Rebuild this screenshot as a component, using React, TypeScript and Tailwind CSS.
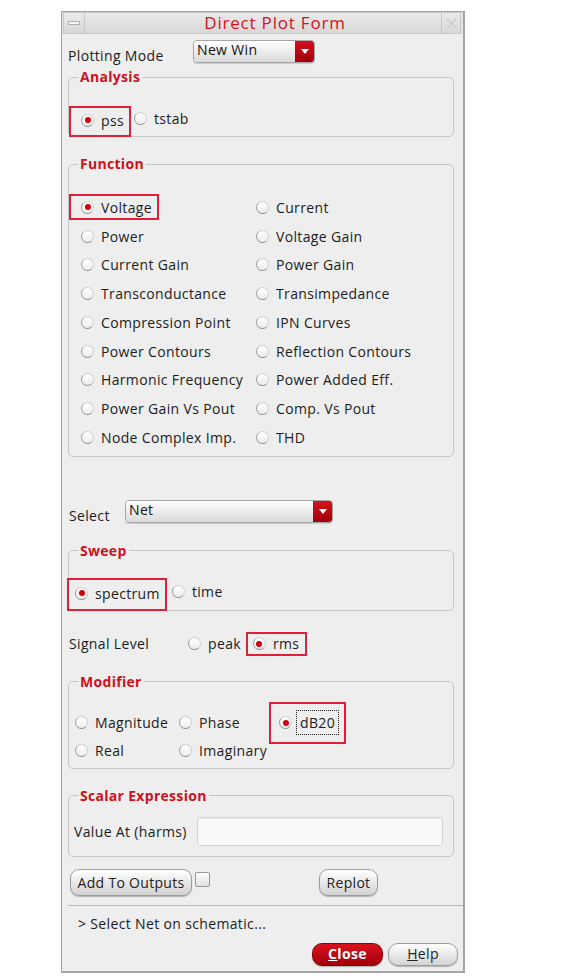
import React from "react";

const FONT = { fontFamily: '"Open Sans", "DejaVu Sans", sans-serif' };

function Radio({ on }: { on?: boolean }) {
  return (
    <span className="flex h-[13px] w-[13px] shrink-0 items-center justify-center rounded-full border border-[#d0d0d0] border-b-[#8c8c8c] border-l-[#9c9c9c] bg-gradient-to-b from-[#ffffff] to-[#ececec]">
      {on && <span className="h-[6px] w-[6px] rounded-full bg-[#d00010]" />}
    </span>
  );
}

function Option({ label, on }: { label: string; on?: boolean }) {
  return (
    <span className="flex items-center gap-[7px] whitespace-nowrap">
      <Radio on={on} />
      <span>{label}</span>
    </span>
  );
}

function Group({ title, children, className }: { title: string; children: React.ReactNode; className?: string }) {
  return (
    <fieldset className={"rounded-[5px] border border-[#c6c6c6] " + (className ?? "")}>
      <legend className="ml-[9px] px-[2px] text-[14px] font-bold leading-[16px] tracking-[0.3px] text-[#d0101c]">
        {title}
      </legend>
      {children}
    </fieldset>
  );
}

function Dropdown({ value, className }: { value: string; className?: string }) {
  return (
    <div className={"flex h-[23px] overflow-hidden rounded-[4px] border border-[#a6a6a6] shadow-[0_1px_1px_rgba(0,0,0,0.15)] " + (className ?? "")}>
      <div className="flex-1 bg-gradient-to-b from-[#ffffff] to-[#dadada] pl-[3px] text-[14px] leading-[18px] text-[#111]">{value}</div>
      <div className="flex w-[19px] items-center justify-center bg-gradient-to-b from-[#d4121c] to-[#a0000a]">
        <svg width="8" height="5" viewBox="0 0 8 5">
          <path d="M0 0h8L4 5z" fill="#ffffff" />
        </svg>
      </div>
    </div>
  );
}

const FUNCS: [string, string][] = [
  ["Voltage", "Current"],
  ["Power", "Voltage Gain"],
  ["Current Gain", "Power Gain"],
  ["Transconductance", "Transimpedance"],
  ["Compression Point", "IPN Curves"],
  ["Power Contours", "Reflection Contours"],
  ["Harmonic Frequency", "Power Added Eff."],
  ["Power Gain Vs Pout", "Comp. Vs Pout"],
  ["Node Complex Imp.", "THD"],
];

const btn =
  "h-[27px] rounded-[9px] border border-[#9c9c9c] bg-gradient-to-b from-[#ffffff] to-[#d2d2d2] px-[6px] text-[14px] tracking-[0.3px] text-[#222] shadow-[0_1px_1px_rgba(0,0,0,0.25)]";

export default function App() {
  return (
    <div className="h-[980px] bg-white pl-[61px] pt-[11px] text-[14px] tracking-[0.35px] text-[#1c1c1c]" style={FONT}>
      <div className="w-[404px] border-b-2 border-l border-r-2 border-t border-[#a4a4a4] bg-[#eeeeee]">
        {/* title bar */}
        <div className="flex h-[22px] bg-[#e2e2e2]">
          <div className="ml-[1px] flex w-[22px] items-center justify-center border border-[#c8c8c8] bg-gradient-to-b from-[#ececec] to-[#d6d6d6]">
            <span className="h-[4px] w-[12px] border border-[#b0b0b0] bg-[#f6f6f6]" />
          </div>
          <div className="flex flex-1 items-center justify-center border border-l-0 border-[#c8c8c8] bg-gradient-to-b from-[#eaeaea] to-[#d8d8d8] pl-[24px] text-[17px] leading-[20px] tracking-[0.8px] text-[#d8101c]">
            Direct Plot Form
          </div>
          <div className="mr-[2px] flex w-[19px] items-center justify-center border border-l-0 border-[#c8c8c8] bg-gradient-to-b from-[#eaeaea] to-[#d8d8d8]">
            <svg width="11" height="11" viewBox="0 0 11 11" fill="none" stroke="#bdbdbd" strokeWidth="1.2" strokeDasharray="2 1">
              <path d="M1 1l9 9M10 1l-9 9" />
            </svg>
          </div>
        </div>

        <div className="pb-[5px] pl-[6px] pr-[9px]">
          {/* plotting mode */}
          <div className="mt-[6px] flex h-[23px]">
            <span className="w-[125px] pt-[8px] leading-[16px]">Plotting Mode</span>
            <Dropdown value="New Win" className="w-[122px]" />
          </div>

          {/* analysis */}
          <Group title="Analysis" className="mt-[6px]">
            <div className="mt-[21px] flex h-[30px] items-start">
              <span className="flex h-[31px] items-center border-2 border-[#e0203a] pb-[3px] pl-[10px] pr-[5px]">
                <Option label="pss" on />
              </span>
              <span className="ml-[3px] flex h-[28px] items-center pb-[3px]">
                <Option label="tstab" />
              </span>
            </div>
          </Group>

          {/* function */}
          <Group title="Function" className="mt-[19px] pb-[4px]">
            <div className="mt-[21px] grid grid-cols-[175px_1fr]">
              {FUNCS.map(([a, b], i) => (
                <React.Fragment key={a}>
                  <div className="flex h-[28.75px] items-center">
                    {i === 0 ? (
                      <span className="flex h-[26px] items-center border-2 border-[#e0203a] pl-[10px] pr-[5px]">
                        <Option label={a} on />
                      </span>
                    ) : (
                      <span className="flex h-[26px] items-center border-2 border-transparent pl-[10px]">
                        <Option label={a} />
                      </span>
                    )}
                  </div>
                  <div className="flex h-[28.75px] items-center pl-[12px]">
                    <Option label={b} />
                  </div>
                </React.Fragment>
              ))}
            </div>
          </Group>

          {/* select */}
          <div className="mt-[43px] flex h-[23px]">
            <span className="w-[57px] pl-[1px] pt-[8px] leading-[16px]">Select</span>
            <Dropdown value="Net" className="w-[208px]" />
          </div>

          {/* sweep */}
          <Group title="Sweep" className="mt-[20px]">
            <div className="mt-[19px] flex h-[32px] items-start">
              <span className="-ml-[2px] flex h-[33px] items-center border-2 border-[#e0203a] pb-[2px] pl-[6px] pr-[5px]">
                <Option label="spectrum" on />
              </span>
              <span className="ml-[5px] flex h-[30px] items-center pb-[2px]">
                <Option label="time" />
              </span>
            </div>
          </Group>

          {/* signal level */}
          <div className="mt-[21px] flex h-[24px] items-center">
            <span className="w-[120px] pl-[1px]">Signal Level</span>
            <Option label="peak" />
            <span className="ml-[5px] flex h-[24px] items-center border-2 border-[#e0203a] pl-[5px] pr-[6px]">
              <Option label="rms" on />
            </span>
          </div>

          {/* modifier */}
          <Group title="Modifier" className="mt-[18px] pb-[12px]">
            <div className="mt-[12px] grid h-[42px] grid-cols-[110px_90px_auto] items-center">
              <span className="pl-[6px]">
                <Option label="Magnitude" />
              </span>
              <Option label="Phase" />
              <span className="flex h-[42px] w-[77px] items-center border-2 border-[#e0203a] pl-[8px]">
                <span className="flex items-center gap-[4px]">
                  <Radio on />
                  <span className="border border-dotted border-[#222] px-[3px] leading-[23px]">dB20</span>
                </span>
              </span>
            </div>
            <div className="-mt-[4px] grid h-[16px] grid-cols-[110px_90px_auto] items-center">
              <span className="pl-[6px]">
                <Option label="Real" />
              </span>
              <Option label="Imaginary" />
            </div>
          </Group>

          {/* scalar expression */}
          <Group title="Scalar Expression" className="mt-[19px] pb-[10px]">
            <div className="mt-[13px] flex items-center pr-[10px]">
              <span className="w-[128px] pl-[5px]">Value At (harms)</span>
              <div className="h-[29px] flex-1 rounded-[3px] border border-[#d4d4d4] bg-[#f9f9f9] shadow-[inset_0_1px_1px_rgba(0,0,0,0.08)]" />
            </div>
          </Group>

          {/* actions */}
          <div className="mt-[12px] flex items-start">
            <button className={btn + " ml-[2px] w-[122px]"}>Add To Outputs</button>
            <span className="ml-[3px] mt-[3px] h-[15px] w-[15px] rounded-[2px] border border-[#9a9a9a] bg-gradient-to-b from-[#ffffff] to-[#e0e0e0]" />
            <button className={btn + " ml-[109px] w-[59px]"}>Replot</button>
          </div>

          <div className="-mr-[9px] mt-[9px] h-[1px] bg-[#b8b8b8]" />

          <div className="mt-[10px] pl-[10px] leading-[16px]">&gt; Select Net on schematic...</div>

          <div className="-mr-[4px] mt-[11px] flex justify-end gap-[5px]">
            <button className="h-[23px] w-[71px] rounded-[10px] border border-[#8a0008] bg-gradient-to-b from-[#d8141e] to-[#a4000a] text-[14px] font-bold leading-[20px] text-white shadow-[0_1px_1px_rgba(0,0,0,0.25)]">
              <span className="underline">C</span>lose
            </button>
            <button className="h-[23px] w-[70px] rounded-[10px] border border-[#9c9c9c] bg-gradient-to-b from-[#ffffff] to-[#d4d4d4] text-[14px] leading-[20px] text-[#222] shadow-[0_1px_1px_rgba(0,0,0,0.25)]">
              <span className="underline">H</span>elp
            </button>
          </div>
        </div>
      </div>
    </div>
  );
}
